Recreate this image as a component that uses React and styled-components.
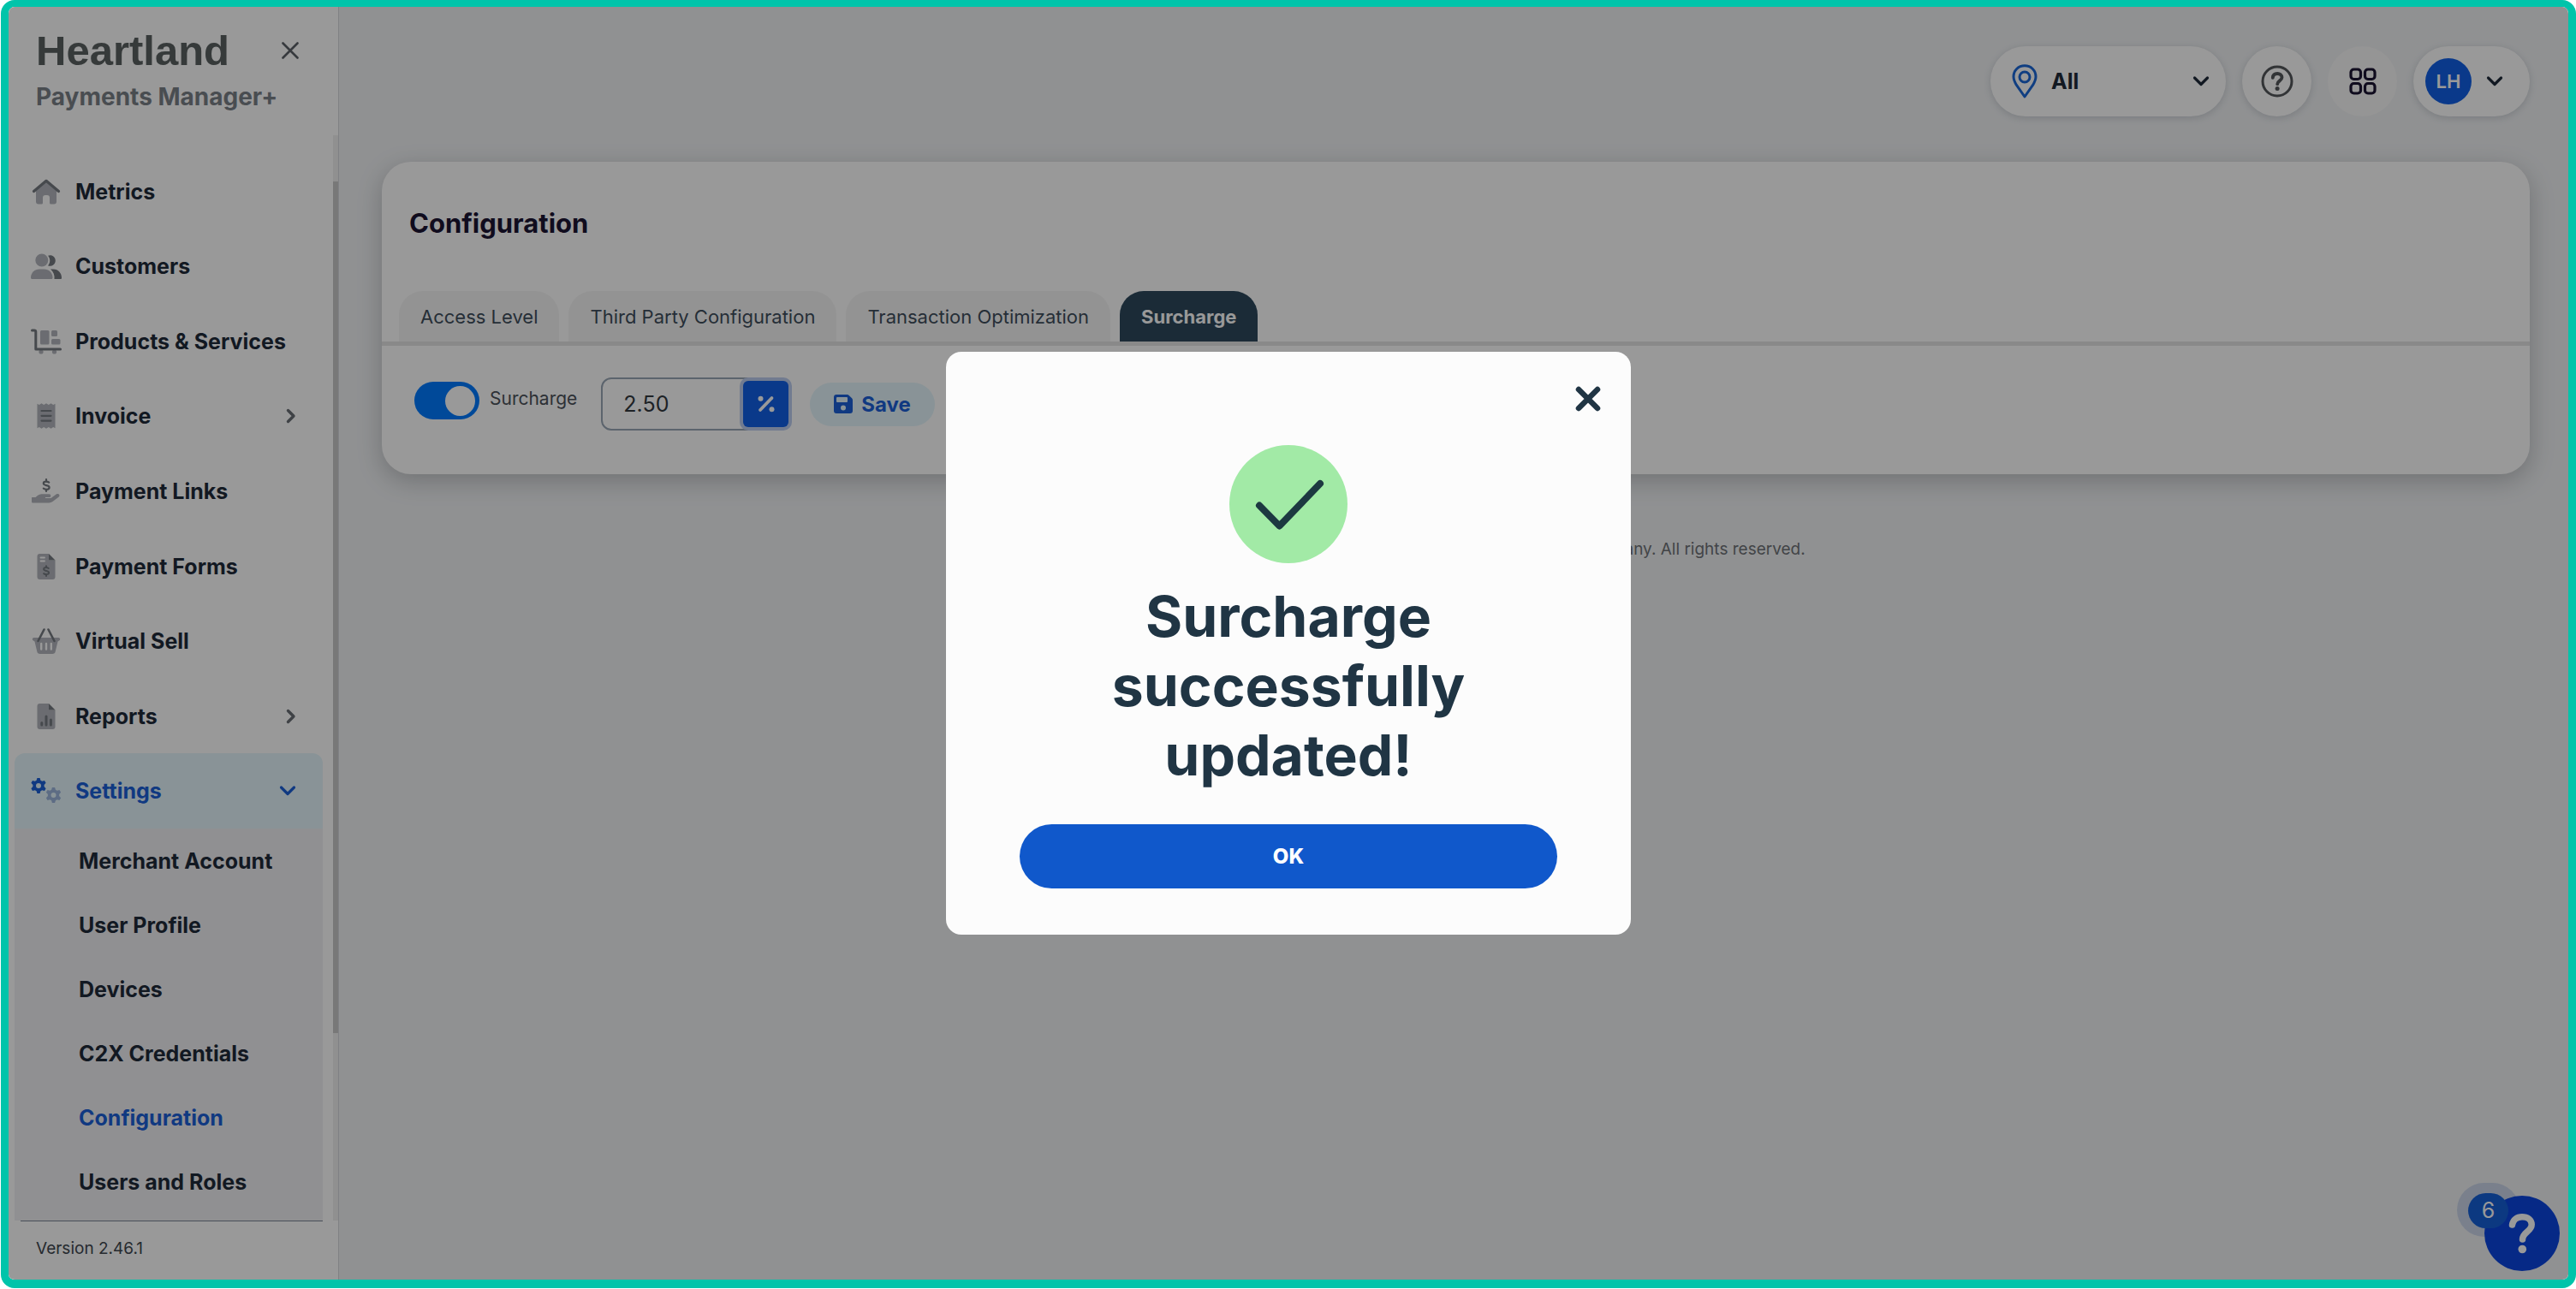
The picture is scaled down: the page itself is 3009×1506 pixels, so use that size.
import React, { useState } from 'react'
import styled, { createGlobalStyle } from 'styled-components'

const DARK = '#757a80'
const LIGHT = '#b2b5bc'
const BLUE = '#1c60d8'

const HomeIcon = () => (
  <NavIcon viewBox="0 0 36 30">
    <path fill={LIGHT} d="M6 13 18 3l12 10v13.500a3 3 0 0 1-3 3h-3.500a1.500 1.500 0 0 1-1.500-1.500v-6a3 3 0 0 0-3-3h-2a3 3 0 0 0-3 3v6a1.500 1.500 0 0 1-1.500 1.500H9a3 3 0 0 1-3-3z" />
    <path fill="none" stroke={DARK} strokeWidth="3.200" strokeLinecap="round" strokeLinejoin="round" d="M3.500 14.500 18 2.300l14.500 12.200" />
  </NavIcon>
)

const CustomersIcon = () => (
  <NavIcon viewBox="0 0 36 30">
    <circle cx="12.800" cy="8" r="7.500" fill={LIGHT} />
    <path fill={LIGHT} d="M0 28.500c0-6 4.500-10 10-10h5.500c5.500 0 10 4 10 10 0 .8-.5 1.500-1.500 1.500H1.500C.5 30 0 29.300 0 28.500z" />
    <path fill={DARK} d="M20 2.700A6.300 6.300 0 1 1 20 14.300c3-3.300 3-8.300 0-11.600z" />
    <path fill={DARK} d="M23 18.500h3.500c5.500 0 9.500 4.500 9.500 10 0 1-.5 1.500-1.500 1.500h-7c.5-4.500-1-8.500-4.500-11.500z" />
  </NavIcon>
)

const ProductsIcon = () => (
  <NavIcon viewBox="0 0 36 30">
    <rect x="11" y="2" width="10.500" height="16.500" rx="1.500" fill={LIGHT} />
    <rect x="24" y="2" width="7" height="7" rx="1.500" fill={LIGHT} />
    <rect x="24" y="12" width="10.500" height="6.500" rx="1.500" fill={LIGHT} />
    <circle cx="12" cy="27" r="2.600" fill={LIGHT} />
    <circle cx="27.500" cy="27" r="2.600" fill={LIGHT} />
    <path fill="none" stroke={DARK} strokeWidth="3" strokeLinecap="round" strokeLinejoin="round" d="M1.500 2H4c1 0 1.800.8 1.800 1.800V24h28.700" />
  </NavIcon>
)

const InvoiceIcon = () => (
  <NavIcon viewBox="0 0 36 30">
    <path fill={LIGHT} d="M7.500.8 9.800 2l2.700-1.800L15.200 2 18 .2 20.800 2 23.500.2 26.200 2l2.300-1.200v28.400L26.200 28l-2.700 1.800-2.700-1.800-2.800 1.800-2.800-1.800-2.700 1.800L9.800 28l-2.300 1.200z" />
    <path stroke={DARK} strokeWidth="2.200" strokeLinecap="round" d="M12.500 9h11M12.500 14.800h11M12.500 20.600h11" />
  </NavIcon>
)

const LinksIcon = () => (
  <NavIcon viewBox="0 0 36 30">
    <path fill="none" stroke={DARK} strokeWidth="2.200" strokeLinecap="round" d="M21.200 4.600c-1-.8-2.200-1-3.400-1-1.800 0-3 .8-3 2.200 0 3.200 6.800 1.400 6.800 4.700 0 1.500-1.400 2.300-3.200 2.300-1.300 0-2.500-.3-3.600-1.100M18 1.200v2.400M18 12.800v2.200" />
    <path fill={LIGHT} d="M1.700 22h3.800l2.700-2.200a7 7 0 0 1 4.300-1.500h9a1.800 1.800 0 0 1 0 3.700H17v1h6.500l6.500-4.700c2.400-1.500 4.700 1.400 2.700 3.200l-7.200 5.500a7 7 0 0 1-4.200 1.500H1.700A1.700 1.700 0 0 1 1 27v-3.500C1 22.500 1 22 1.700 22z" />
  </NavIcon>
)

const FormsIcon = () => (
  <NavIcon viewBox="0 0 36 30">
    <path fill={LIGHT} d="M7.500 3a3 3 0 0 1 3-3h10.500v7.500h7.500V27a3 3 0 0 1-3 3h-15a3 3 0 0 1-3-3z" />
    <path fill={DARK} d="M21 0l7.500 7.500H21z" />
    <path stroke="#fff" strokeWidth="1.800" strokeLinecap="round" d="M11.500 4.500h4.500M11.500 8.500h4.500" />
    <path fill="none" stroke={DARK} strokeWidth="2" strokeLinecap="round" d="M20.800 17c-1-.7-1.900-.9-3-.9-1.600 0-2.700.7-2.700 1.900 0 2.800 6 1.300 6 4.100 0 1.300-1.200 2-2.800 2-1.200 0-2.200-.3-3.200-1M18 14.200v1.900M18 24.100v1.900" />
  </NavIcon>
)

const BasketIcon = () => (
  <NavIcon viewBox="0 0 36 30">
    <path fill={LIGHT} fillRule="evenodd" d="M3.500 11h29a1.800 1.800 0 0 1 .5 3.500l-1.500 1-2.800 11.800A3.500 3.500 0 0 1 25.300 30H10.700a3.500 3.500 0 0 1-3.400-2.700L4.500 15.500l-1.500-1A1.800 1.800 0 0 1 3.500 11zM11 18v6.500a1.200 1.200 0 0 0 2.400 0V18a1.200 1.200 0 0 0-2.400 0zm5.800 0v6.500a1.200 1.200 0 0 0 2.400 0V18a1.200 1.200 0 0 0-2.400 0zm5.800 0v6.500a1.200 1.200 0 0 0 2.400 0V18a1.200 1.200 0 0 0-2.400 0z" />
    <path fill="none" stroke={DARK} strokeWidth="2.600" strokeLinecap="round" d="M15.500 1.500 8.500 15M20.500 1.500l7 13.500" />
  </NavIcon>
)

const ReportsIcon = () => (
  <NavIcon viewBox="0 0 36 30">
    <path fill={LIGHT} d="M7.500 3a3 3 0 0 1 3-3h10.500v7.500h7.500V27a3 3 0 0 1-3 3h-15a3 3 0 0 1-3-3z" />
    <path fill={DARK} d="M21 0l7.500 7.500H21z" />
    <path stroke={DARK} strokeWidth="3" strokeLinecap="round" d="M12.800 22.500v2.500M18 15v10M23.400 19v6" />
  </NavIcon>
)

const gear = 'M7.400 0h3.200l.8 2.800 1.800 1 2.800-.8L17.600 5.800l-2 2.200v2l2 2.200-1.600 2.800-2.800-.8-1.800 1-.8 2.800H7.400l-.8-2.800-1.800-1-2.800.8L.4 12.200l2-2.200V8l-2-2.200L2 3l2.800.8 1.800-1zM9 6a3 3 0 1 0 0 6 3 3 0 0 0 0-6z'

const SettingsIcon = () => (
  <NavIcon viewBox="0 0 36 30">
    <path fill={BLUE} fillRule="evenodd" d={gear} />
    <path fill="#9bb4dc" fillRule="evenodd" transform="translate(17.500 11)" d={gear} />
  </NavIcon>
)

const ChevronRight = () => (
  <svg width="12" height="18" viewBox="0 0 12 18">
    <path fill="none" stroke="#6a6f76" strokeWidth="3.400" strokeLinecap="round" strokeLinejoin="round" d="M2.500 2.500 9 9l-6.500 6.500" />
  </svg>
)

const ChevronDown = ({ color = '#1f2b3a' }) => (
  <svg width="20" height="14" viewBox="0 0 20 14">
    <path fill="none" stroke={color} strokeWidth="3.200" strokeLinecap="round" strokeLinejoin="round" d="M2.500 3 10 10.500 17.500 3" />
  </svg>
)

const NAV = [
  { label: 'Metrics', Icon: HomeIcon },
  { label: 'Customers', Icon: CustomersIcon },
  { label: 'Products & Services', Icon: ProductsIcon },
  { label: 'Invoice', Icon: InvoiceIcon, more: true },
  { label: 'Payment Links', Icon: LinksIcon },
  { label: 'Payment Forms', Icon: FormsIcon },
  { label: 'Virtual Sell', Icon: BasketIcon },
  { label: 'Reports', Icon: ReportsIcon, more: true },
  { label: 'Settings', Icon: SettingsIcon, open: true },
]

const SETTINGS = ['Merchant Account', 'User Profile', 'Devices', 'C2X Credentials', 'Configuration', 'Users and Roles']

const TABS = ['Access Level', 'Third Party Configuration', 'Transaction Optimization', 'Surcharge']

const Sidebar = () => (
  <StyledSidebar>
    <Brand>
      <BrandRow>
        <Logo>Heartland</Logo>
        <PlainButton aria-label="Close menu">
          <svg width="20" height="20" viewBox="0 0 20 20">
            <path stroke="#5d6268" strokeWidth="2.600" strokeLinecap="round" d="M1.500 1.500l17 17M18.500 1.500l-17 17" />
          </svg>
        </PlainButton>
      </BrandRow>
      <Product>Payments Manager+</Product>
    </Brand>
    <NavArea>
      <Nav>
        <NavList>
          {NAV.map(({ label, Icon, more, open }) => (
            <li key={label}>
              <NavLink href="#" $active={open}>
                <Icon />
                <span>{label}</span>
                {more && <ChevronRight />}
                {open && <ChevronDown color={BLUE} />}
              </NavLink>
            </li>
          ))}
        </NavList>
        <SubList>
          {SETTINGS.map((label) => (
            <li key={label}>
              <SubLink href="#" $active={label === 'Configuration'}>{label}</SubLink>
            </li>
          ))}
        </SubList>
      </Nav>
      <ScrollTrack>
        <ScrollThumb />
      </ScrollTrack>
    </NavArea>
    <Version>Version 2.46.1</Version>
  </StyledSidebar>
)

const Header = () => (
  <StyledHeader>
    <Location>
      <svg width="30" height="40" viewBox="0 0 30 40">
        <path fill="none" stroke="#1c68d8" strokeWidth="3" strokeLinejoin="round" d="M15 1.800c7.500 0 13 5.600 13 12.800 0 3.600-1.500 6.600-3.300 9.600L15 38 5.300 24.200C3.500 21.200 2 18.200 2 14.600 2 7.400 7.500 1.800 15 1.800z" />
        <circle cx="15" cy="15" r="6" fill="none" stroke="#1c68d8" strokeWidth="3" />
      </svg>
      <LocationSelect aria-label="Location" defaultValue="All">
        <option>All</option>
      </LocationSelect>
      <ChevronDown />
    </Location>
    <RoundButton aria-label="Help">
      <svg width="38" height="38" viewBox="0 0 38 38" fill="none" stroke="#54575b" strokeLinecap="round">
        <circle cx="19" cy="19" r="17" strokeWidth="3" />
        <path strokeWidth="3.800" d="M13.800 14.800c.2-3 2.400-4.800 5.400-4.800s5.300 1.900 5.300 4.600c0 3.700-5.300 3.900-5.300 7.600" />
        <circle cx="19.100" cy="27.500" r="2.500" fill="#54575b" stroke="none" />
      </svg>
    </RoundButton>
    <RoundButton aria-label="Apps" $flat>
      <svg width="32" height="32" viewBox="0 0 32 32" fill="none" stroke="#1b1433" strokeWidth="3.200">
        <rect x="2" y="2" width="11.500" height="11.500" rx="3.500" />
        <rect x="18.500" y="2" width="11.500" height="11.500" rx="3.500" />
        <rect x="2" y="18.500" width="11.500" height="11.500" rx="3.500" />
        <rect x="18.500" y="18.500" width="11.500" height="11.500" rx="3.500" />
      </svg>
    </RoundButton>
    <Account>
      <Avatar>LH</Avatar>
      <ChevronDown />
    </Account>
  </StyledHeader>
)

const App = () => {
  const [isModalVisible, setIsModalVisible] = useState(true)
  const [isEnabled, setIsEnabled] = useState(true)

  const closeModal = () => {
    setIsModalVisible(false)
  }

  return (
    <>
      <GlobalStyle />
      <Frame>
        <Sidebar />
        <Main>
          <Header />
          <Card>
            <CardTitle>Configuration</CardTitle>
            <Tabs role="tablist">
              {TABS.map((tab) => (
                <Tab key={tab} role="tab" aria-selected={tab === 'Surcharge'} $active={tab === 'Surcharge'}>{tab}</Tab>
              ))}
            </Tabs>
            <SettingsRow>
              <SwitchLabel>
                <Switch type="checkbox" checked={isEnabled} onChange={() => setIsEnabled(!isEnabled)} />
                <span>Surcharge</span>
              </SwitchLabel>
              <RateField>
                <RateInput aria-label="Surcharge rate" defaultValue="2.50" />
                <PercentButton aria-label="Percent">
                  <svg width="22" height="22" viewBox="0 0 22 22">
                    <path stroke="#fff" strokeWidth="3.800" strokeLinecap="round" d="M17.500 4 4 18" />
                    <circle cx="4.500" cy="4.800" r="3" fill="#fff" />
                    <circle cx="17.500" cy="17.300" r="3" fill="#fff" />
                  </svg>
                </PercentButton>
              </RateField>
              <SaveButton>
                <svg width="22" height="22" viewBox="0 0 22 22">
                  <path fill={BLUE} fillRule="evenodd" d="M3 0h12.600c.8 0 1.500.3 2.100.9l3.400 3.400c.6.600.9 1.300.9 2.100V19a3 3 0 0 1-3 3H3a3 3 0 0 1-3-3V3a3 3 0 0 1 3-3zm1 3a1 1 0 0 0-1 1v4a1 1 0 0 0 1 1h11a1 1 0 0 0 1-1V4a1 1 0 0 0-1-1zm7 9.500a3 3 0 1 0 0 6 3 3 0 0 0 0-6z" />
                </svg>
                Save
              </SaveButton>
            </SettingsRow>
          </Card>
          <Copyright>© 2025 Heartland Payment Systems, LLC a Global Payments Company. All rights reserved.</Copyright>
        </Main>
        <HelpWidget>
          <HelpHalo />
          <HelpButton aria-label="Open help">
            <svg width="34" height="48" viewBox="0 0 34 48">
              <path fill="none" stroke="#fff" strokeWidth="7.500" strokeLinecap="round" strokeLinejoin="round" d="M5.500 14C6.500 8 11 4.800 17 4.800c6.500 0 11.200 3.600 11.200 9 0 8-10.700 8.700-10.700 17.200" />
              <circle cx="17.300" cy="42.500" r="4.800" fill="#fff" />
            </svg>
          </HelpButton>
          <HelpCount>6</HelpCount>
        </HelpWidget>
        {isModalVisible ? <Backdrop>
          <ModalBox role="dialog" aria-modal="true" aria-labelledby="modal-title">
            <ModalClose aria-label="Close" onClick={closeModal}>
              <svg width="30" height="30" viewBox="0 0 30 30">
                <path stroke="#203544" strokeWidth="6.500" strokeLinecap="round" d="M4 4l22 22M26 4 4 26" />
              </svg>
            </ModalClose>
            <CheckMark viewBox="0 0 138 138">
              <circle cx="69" cy="69" r="69" fill="#a2eaa6" />
              <path fill="none" stroke="#1d3941" strokeWidth="8" strokeLinecap="round" strokeLinejoin="round" d="M35 70.500 58.500 94.500 106 45" />
            </CheckMark>
            <ModalTitle id="modal-title">Surcharge successfully updated!</ModalTitle>
            <OkButton onClick={closeModal}>OK</OkButton>
          </ModalBox>
        </Backdrop> : null}
      </Frame>
    </>
  )
}

export default App

const GlobalStyle = createGlobalStyle`
  *, *::before, *::after {
    box-sizing: border-box;
  }
  body {
    margin: 0;
    background: #fff;
    font-family: Inter, "Liberation Sans", sans-serif;
    color: #1f2b3a;
  }
  ul {
    list-style: none;
    margin: 0;
    padding: 0;
  }
  button, input, select {
    font-family: inherit;
  }
  button {
    cursor: pointer;
  }
  svg {
    display: block;
    flex: none;
  }
`
const Frame = styled.div`
  position: relative;
  display: flex;
  height: calc(100vh - 1px);
  margin-left: 1px;
  border: 9px solid #00c4aa;
  border-width: 8px 9px 10px;
  border-radius: 16px;
  overflow: hidden;
`
const StyledSidebar = styled.aside`
  flex: none;
  display: flex;
  flex-direction: column;
  width: 386px;
  background-color: #fff;
  border-right: 1px solid #d6d8dc;
`
const Brand = styled.div`
  flex: none;
  height: 150px;
  padding: 21px 46px 0 32px;
`
const BrandRow = styled.div`
  display: flex;
  align-items: center;
  justify-content: space-between;
`
const Logo = styled.div`
  font-family: "Liberation Sans", Arial, sans-serif;
  font-weight: 700;
  font-size: 49px;
  line-height: 60px;
  color: #5b6162;
`
const PlainButton = styled.button`
  padding: 0;
  border: none;
  background: none;
`
const Product = styled.div`
  font-size: 28px;
  line-height: 48px;
  font-weight: 700;
  color: #7b8088;
`
const NavArea = styled.div`
  flex: 1;
  min-height: 0;
  display: flex;
  justify-content: space-between;
`
const Nav = styled.nav`
  width: 360px;
  margin-left: 7px;
  padding-top: 22px;
  overflow: hidden;
`
const NavList = styled.ul`
  display: grid;
  grid-auto-rows: 1fr;
  height: 788px;
`
const NavLink = styled.a`
  display: flex;
  align-items: center;
  height: 100%;
  padding: 0 31px 0 19px;
  border-radius: 12px 12px 0 0;
  background-color: ${({ $active }) => ($active ? '#e4f6fc' : 'transparent')};
  color: ${({ $active }) => ($active ? BLUE : '#1f2b3a')};
  font-size: 25px;
  font-weight: 700;
  text-decoration: none;

  span {
    flex: 1;
    margin-left: 16px;
  }
`
const NavIcon = styled.svg`
  width: 36px;
  height: 30px;
`
const SubList = styled.ul`
  background-color: #f0f1f3;
  padding-bottom: 24px;
`
const SubLink = styled.a`
  display: flex;
  align-items: center;
  height: 75px;
  padding-left: 75px;
  font-size: 25px;
  font-weight: 700;
  color: ${({ $active }) => ($active ? BLUE : '#1f2b3a')};
  text-decoration: none;
`
const ScrollTrack = styled.div`
  width: 6px;
  padding-top: 54px;
  background-color: #f1f1f1;
`
const ScrollThumb = styled.div`
  height: 82%;
  background-color: #c8c8c8;
`
const Version = styled.div`
  flex: none;
  height: 69px;
  margin: 0 18px 0 14px;
  padding-left: 18px;
  border-top: 1px solid #7b8494;
  font-size: 19px;
  line-height: 64px;
  color: #40474f;
`
const Main = styled.main`
  flex: 1;
  min-width: 0;
  padding: 46px 45px 0 50px;
  background-color: #f0f2f4;
`
const StyledHeader = styled.header`
  display: flex;
  justify-content: flex-end;
  gap: 19px;
  margin-bottom: 53px;
`
const Pill = styled.div`
  display: flex;
  align-items: center;
  height: 82px;
  border-radius: 41px;
  background-color: #fff;
  box-shadow: 0 2px 8px rgba(40, 50, 70, 0.18);
`
const Location = styled(Pill)`
  width: 275px;
  padding: 0 19px 0 25px;
`
const LocationSelect = styled.select`
  appearance: none;
  flex: 1;
  min-width: 0;
  margin-left: 16px;
  padding: 0;
  border: none;
  background: none;
  font-size: 25px;
  font-weight: 700;
  color: #1f2b3a;
`
const RoundButton = styled.button`
  display: flex;
  align-items: center;
  justify-content: center;
  width: 81px;
  height: 82px;
  padding: 0;
  border: none;
  border-radius: 50%;
  background-color: ${({ $flat }) => ($flat ? '#f8f8f8' : '#fff')};
  box-shadow: ${({ $flat }) => ($flat ? 'none' : '0 2px 8px rgba(40, 50, 70, 0.18)')};
`
const Account = styled(Pill).attrs({ as: 'button' })`
  width: 136px;
  padding: 0 31px 0 14px;
  border: none;
  justify-content: space-between;
`
const Avatar = styled.span`
  width: 54px;
  height: 54px;
  border-radius: 50%;
  background-color: #1160e6;
  color: #fff;
  font-size: 22px;
  font-weight: 600;
  line-height: 54px;
  text-align: center;
`
const Card = styled.section`
  background-color: #fff;
  border-radius: 34px;
  box-shadow: 0 8px 28px rgba(40, 44, 52, 0.26);
`
const CardTitle = styled.h1`
  margin: 0;
  padding: 52px 32px 59px;
  font-size: 31px;
  line-height: 40px;
  font-weight: 700;
  color: #1b1433;
`
const Tabs = styled.div`
  display: flex;
  gap: 11px;
  padding: 0 20px;
  border-bottom: 5px solid #e4e4e4;
`
const Tab = styled.button`
  height: 59px;
  padding: 0 25px;
  border: none;
  border-radius: 28px 28px 0 0;
  background-color: ${({ $active }) => ($active ? '#2d495d' : '#f6f6f6')};
  color: ${({ $active }) => ($active ? '#fff' : '#3f4e5c')};
  font-size: 22px;
  font-weight: ${({ $active }) => ($active ? 700 : 400)};
`
const SettingsRow = styled.div`
  display: flex;
  align-items: center;
  padding: 37px 38px 51px;
`
const SwitchLabel = styled.label`
  display: flex;
  align-items: flex-start;
  gap: 12px;
  margin-right: 28px;
  padding-bottom: 8px;
  font-size: 21px;
  line-height: 40px;
  color: #4c525a;
`
const Switch = styled.input`
  appearance: none;
  display: flex;
  align-items: center;
  justify-content: ${({ checked }) => (checked ? 'flex-end' : 'flex-start')};
  width: 76px;
  height: 44px;
  margin: 0;
  padding: 0 5px;
  border-radius: 22px;
  background-color: ${({ checked }) => (checked ? '#007bff' : '#adb5bd')};

  &::before {
    content: '';
    width: 35px;
    height: 35px;
    border-radius: 50%;
    background-color: #fff;
  }
`
const RateField = styled.div`
  display: flex;
  align-items: center;
  width: 219px;
  height: 62px;
  margin-right: 25px;
  border: 2px solid #9aa7b6;
  border-radius: 12px;
`
const RateInput = styled.input`
  flex: 1;
  min-width: 0;
  padding: 0 0 0 24px;
  border: none;
  outline: none;
  background: none;
  font-size: 25px;
  color: #33393f;
`
const PercentButton = styled.button`
  flex: none;
  display: flex;
  align-items: center;
  justify-content: center;
  width: 53px;
  height: 54px;
  margin-right: -2px;
  padding: 0;
  border: none;
  border-radius: 6px;
  background-color: #1160e6;
  box-shadow: 0 0 0 4px #bccdf0;
`
const SaveButton = styled.button`
  display: flex;
  align-items: center;
  gap: 10px;
  height: 51px;
  padding: 0 28px;
  border: none;
  border-radius: 26px;
  background-color: #e4f6fc;
  color: ${BLUE};
  font-size: 24px;
  font-weight: 700;
`
const Copyright = styled.p`
  margin: 73px 0 0;
  font-size: 19px;
  line-height: 30px;
  text-align: center;
  color: #6f7277;
`
const HelpWidget = styled.div`
  position: absolute;
  right: 10px;
  bottom: 10px;
  width: 120px;
  height: 103px;
`
const HelpHalo = styled.span`
  position: absolute;
  left: 0;
  top: 0;
  width: 73px;
  height: 63px;
  border-radius: 32px;
  background-color: #cbd6ea;
`
const HelpButton = styled.button`
  position: absolute;
  right: 0;
  bottom: 0;
  display: flex;
  align-items: center;
  justify-content: center;
  width: 88px;
  height: 88px;
  padding: 0;
  border: none;
  border-radius: 50%;
  background-color: #0a45e0;
`
const HelpCount = styled.span`
  position: absolute;
  left: 13px;
  top: 12px;
  width: 47px;
  height: 41px;
  border-radius: 21px;
  background-color: #1560d8;
  color: #fff;
  font-size: 25px;
  line-height: 41px;
  text-align: center;
`
const Backdrop = styled.div`
  position: absolute;
  inset: 0;
  display: flex;
  align-items: center;
  justify-content: center;
  background-color: rgba(0, 0, 0, 0.4);
`
const ModalBox = styled.div`
  position: relative;
  display: flex;
  flex-direction: column;
  align-items: center;
  width: 800px;
  padding: 109px 86px 54px;
  border-radius: 18px;
  background-color: #fcfcfc;
`
const ModalClose = styled(PlainButton)`
  position: absolute;
  top: 40px;
  right: 35px;
`
const CheckMark = styled.svg`
  width: 138px;
  height: 138px;
  margin-bottom: 22px;
`
const ModalTitle = styled.h2`
  max-width: 500px;
  margin: 0 0 40px;
  font-size: 66px;
  line-height: 81px;
  font-weight: 700;
  text-align: center;
  color: #203544;
`
const OkButton = styled.button`
  width: 100%;
  height: 75px;
  border: none;
  border-radius: 38px;
  background-color: #1058cb;
  color: #fff;
  font-size: 24px;
  font-weight: 800;
`
